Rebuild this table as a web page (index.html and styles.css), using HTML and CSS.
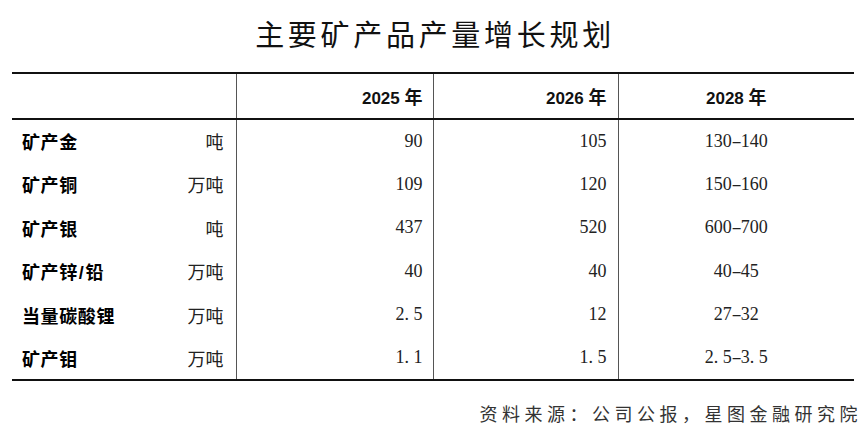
FILE: index.html
```
<!DOCTYPE html>
<html lang="zh-CN">
<head>
<meta charset="utf-8">
<title>主要矿产品产量增长规划</title>
<link rel="stylesheet" href="styles.css">
</head>
<body>
<div class="page">
  <h1 class="title">主要矿产品产量增长规划</h1>
  <table class="plan">
    <colgroup>
      <col class="c-name">
      <col class="c-y1">
      <col class="c-y2">
      <col class="c-y3">
    </colgroup>
    <thead>
      <tr>
        <th class="blank"></th>
        <th class="yr right">2025 <span class="nian">年</span></th>
        <th class="yr right">2026 <span class="nian">年</span></th>
        <th class="yr center">2028 <span class="nian">年</span></th>
      </tr>
    </thead>
    <tbody>
      <tr>
        <td class="name"><div class="nm"><span class="lbl">矿产金</span><span class="unit">吨</span></div></td>
        <td class="num right">90</td>
        <td class="num right">105</td>
        <td class="num center">130<span class="d">-</span>140</td>
      </tr>
      <tr>
        <td class="name"><div class="nm"><span class="lbl">矿产铜</span><span class="unit">万吨</span></div></td>
        <td class="num right">109</td>
        <td class="num right">120</td>
        <td class="num center">150<span class="d">-</span>160</td>
      </tr>
      <tr>
        <td class="name"><div class="nm"><span class="lbl">矿产银</span><span class="unit">吨</span></div></td>
        <td class="num right">437</td>
        <td class="num right">520</td>
        <td class="num center">600<span class="d">-</span>700</td>
      </tr>
      <tr>
        <td class="name"><div class="nm"><span class="lbl">矿产锌<span class="sl">/</span>铅</span><span class="unit">万吨</span></div></td>
        <td class="num right">40</td>
        <td class="num right">40</td>
        <td class="num center">40<span class="d">-</span>45</td>
      </tr>
      <tr>
        <td class="name"><div class="nm"><span class="lbl">当量碳酸锂</span><span class="unit">万吨</span></div></td>
        <td class="num right">2<span class="p">.</span>5</td>
        <td class="num right">12</td>
        <td class="num center">27<span class="d">-</span>32</td>
      </tr>
      <tr>
        <td class="name"><div class="nm"><span class="lbl">矿产钼</span><span class="unit">万吨</span></div></td>
        <td class="num right">1<span class="p">.</span>1</td>
        <td class="num right">1<span class="p">.</span>5</td>
        <td class="num center">2<span class="p">.</span>5<span class="d">-</span>3<span class="p">.</span>5</td>
      </tr>
    </tbody>
  </table>
  <p class="source">资料来源：公司公报，星图金融研究院</p>
</div>
</body>
</html>
```

FILE: styles.css
```
html, body {
  margin: 0;
  padding: 0;
  background: #ffffff;
}

.page {
  width: 865px;
  box-sizing: border-box;
  padding: 0 11px 0 12px;
  font-family: "Noto Sans CJK SC", "Noto Sans", sans-serif;
  color: #111;
}

.title {
  margin: 0;
  padding: 13px 0 19px 4px;
  font-size: 29px;
  line-height: 40px;
  font-weight: 400;
  letter-spacing: 3.7px;
  text-align: center;
  color: #111;
}

.plan {
  width: 842px;
  table-layout: fixed;
  border-collapse: collapse;
  border-top: 2px solid #111;
  border-bottom: 2px solid #111;
}

.c-name { width: 224px; }
.c-y1 { width: 197px; }
.c-y2 { width: 185px; }
.c-y3 { width: 236px; }

.plan th,
.plan td {
  padding: 0;
  border-left: 1px solid #555;
  border-right: 1px solid #555;
  vertical-align: middle;
}

.plan th:first-child,
.plan td:first-child {
  border-left: none;
}

.plan th:last-child,
.plan td:last-child {
  border-right: none;
}

.plan thead tr {
  height: 46px;
  border-bottom: 2px solid #111;
}

.plan tbody tr {
  height: 43.5px;
}

.yr {
  font-family: "Liberation Sans", Arial, sans-serif;
  font-weight: 700;
  font-size: 17px;
  color: #111;
}

.nian {
  font-family: "Noto Sans CJK SC", sans-serif;
  font-size: 18px;
  font-weight: 700;
}

.right {
  text-align: right;
  padding-right: 10px !important;
}

.plan .num.right:nth-child(3),
.plan .yr.right:nth-child(3) {
  padding-right: 11px !important;
}

.center {
  text-align: center;
}

.nm {
  display: flex;
  justify-content: space-between;
  align-items: center;
  padding: 0 12px 0 10px;
}

.lbl {
  font-weight: 700;
  font-size: 18px;
  letter-spacing: 0.6px;
  color: #000;
}

.sl {
  font-family: "Liberation Sans", Arial, sans-serif;
  font-weight: 700;
  padding: 0 1px;
}

.unit {
  font-size: 18px;
  font-weight: 400;
  color: #222;
}

.num {
  font-family: "Liberation Serif", "Times New Roman", serif;
  font-size: 18px;
  color: #222;
}

.p {
  display: inline-block;
  width: 0.5em;
  text-align: left;
}

.d {
  display: inline-block;
  width: 0.5em;
  text-align: center;
  transform: scaleX(1.7);
}

.source {
  margin: 20px 0 0 0;
  margin-right: -8px;
  font-size: 18px;
  line-height: 24px;
  letter-spacing: 4.5px;
  text-align: right;
  color: #333;
}
```
